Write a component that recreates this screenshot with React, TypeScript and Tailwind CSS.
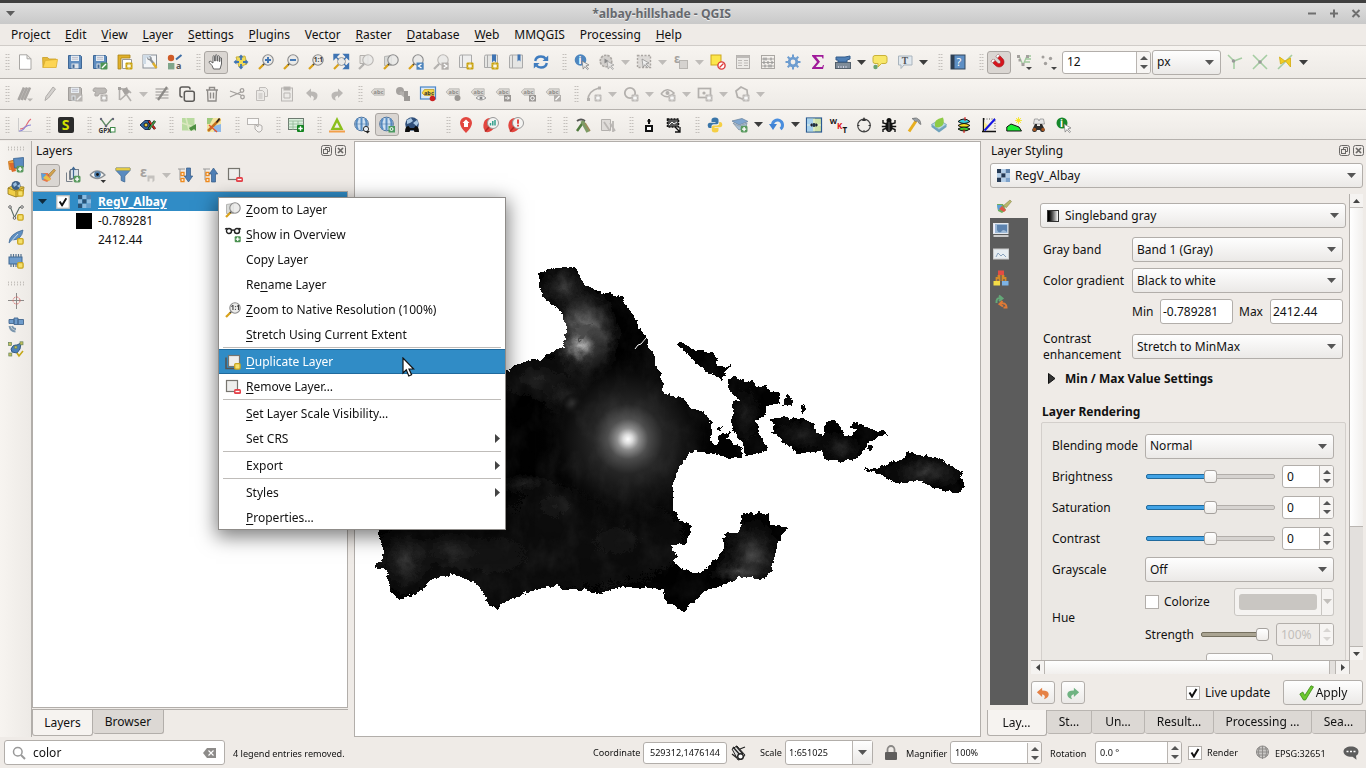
import React from "react";

const grad = "bg-gradient-to-b from-[#fefefe] to-[#ebe9e7]";
const frame = "border border-[#b2aeaa] rounded-[3px]";

function Mn({ t }: { t: string }) {
  const i = t.indexOf("&");
  if (i < 0) return <span className="whitespace-pre">{t}</span>;
  return (
    <span className="whitespace-pre">
      {t.slice(0, i)}
      <u className="underline decoration-1 underline-offset-[2px]">{t[i + 1]}</u>
      {t.slice(i + 2)}
    </span>
  );
}

/* ---------- shared icon parts ---------- */
const Star = ({ c = "#c9a20c" }: { c?: string }) => (
  <g>
    <rect x="8.5" y="8.5" width="7" height="7" rx="1" fill={c} />
    <path d="M12 9.5v5M9.8 10.8l4.4 2.4M14.2 10.8l-4.4 2.4" stroke="#fff" strokeWidth="1" />
  </g>
);
const Plus = () => (
  <g>
    <rect x="8.7" y="8.7" width="6.8" height="6.8" rx="1.4" fill="#5a9a5f" />
    <path d="M12.1 10v4.2M10 12.1h4.2" stroke="#fff" strokeWidth="1.4" />
  </g>
);
const Gold = () => <rect x="9.7" y="9.7" width="5.4" height="5.4" rx="1" fill="#f5e06b" stroke="#c9a521" strokeWidth="1.3" />;
const Lens = ({ x = 10, y = 6, g = false, children }: { x?: number; y?: number; g?: boolean; children?: React.ReactNode }) => (
  <g>
    <path d="M5.8 10.2L1 15" stroke={g ? "#b5b3b0" : "#d9a21b"} strokeWidth="2.2" />
    <path d="M7 9L5 11" stroke={g ? "#aaa" : "#444"} strokeWidth="1.5" />
    <circle cx={x} cy={y} r="5.2" fill="#e9e9e7" fillOpacity=".85" stroke={g ? "#b9b6b3" : "#8b8b8b"} strokeWidth="1.1" />
    {children}
  </g>
);
const Floppy = ({ a = "#5f8dbf", b = "#3f6795" }: { a?: string; b?: string }) => (
  <g>
    <path d="M1.5 1.5h12l1 1v12h-13z" fill={a} stroke={b} />
    <rect x="4" y="1.6" width="8" height="5.4" fill="#e8edf2" />
    <path d="M5 3.4h6M5 5.2h6" stroke="#aab" strokeWidth=".7" />
    <rect x="4.5" y="9.5" width="7" height="5" fill="#dde3ea" />
    <rect x="5.5" y="10.5" width="2" height="3.4" fill={b} />
  </g>
);
const Tag = ({ children, dark = "#8c8a87" }: { children?: React.ReactNode; dark?: string }) => (
  <g>
    <path d="M1 6l3-3.2h10.2v6.4H4z" fill="#dbd8d4" stroke="#b8b5b1" strokeWidth=".8" />
    <text x="3.6" y="8" fontSize="5.6" fontWeight="bold" fill={dark} fontFamily="Noto Sans">abc</text>
    {children}
  </g>
);
const Globe = ({ c = "#5b8fc4", l = "#cfe0f0" }: { c?: string; l?: string }) => (
  <g>
    <circle cx="7.5" cy="7" r="6.8" fill={l} stroke="#4c6f98" strokeWidth="1" />
    <path d="M7.5 .5v13M3.800 1.500q-2.6 5.5 0 11M11.200 1.500q2.6 5.5 0 11" stroke={c} strokeWidth="2" fill="none" />
    <path d="M1 7h13" stroke="#44709f" strokeWidth=".5" />
  </g>
);
const Checker = ({ s = 13 }: { s?: number }) => {
  const c = ["#253a55", "#b5d0ea", "#5b7fa8", "#b5d0ea", "#253a55", "#b5d0ea", "#253a55", "#b5d0ea", "#7ea3cb"];
  return (
    <svg width={s} height={s} viewBox="0 0 3 3">
      {c.map((f, i) => <rect key={i} x={i % 3} y={Math.floor(i / 3)} width="1" height="1" fill={f} />)}
    </svg>
  );
};
const T = ({ x, y, s, f, children, w = "bold" }: { x: number; y: number; s: number; f: string; children: string; w?: string }) => (
  <text x={x} y={y} fontSize={s} fill={f} fontWeight={w} fontFamily="Noto Sans">{children}</text>
);
const G = "#b3b0ad";
const Binoc = ({ c = "#111" }: { c?: string }) => (
  <path d="M3 15q-3-1-1-4l2-4h2v2h3V7h2l2 4q2 3-1 4-2.500.6-3-2h-3q-.5 2.600-3 2z" fill={c} />
);

const icons: Record<string, React.ReactNode> = {
  new: <path d="M2.500.8h7.500l4 4v10.500h-11.500zM10 .8v4h4" fill="#fff" stroke="#a9a7a4" />,
  open: <g><path d="M.6 3.500h5l1.500 1.500h7v2H3.500L1 13.500z" fill="#e5b93a" stroke="#c99d22" strokeWidth=".8" /><path d="M3.300 6.400l12.200-1-1.300 8.100H1z" fill="#fdd554" stroke="#dcae2e" strokeWidth=".8" /></g>,
  save: <Floppy />,
  saveas: <g><Floppy /><rect x="8.500" y="8.500" width="7" height="7" rx="1" fill="#4f9555" /><path d="M10 14l4-4" stroke="#fff" strokeWidth="1.400" /></g>,
  layout: <g><path d="M1 1h12v3H4v11H1z" fill="#e0b02a" stroke="#a98315" strokeWidth=".8" /><path d="M5.500 5.500h9v9h-9z" fill="#fff" stroke="#999" /><Star /></g>,
  layman: <g><rect x="1" y="1" width="13.500" height="13" fill="#f3f5f7" stroke="#8a9097" /><path d="M1 1h8v3H4v6H1z" fill="#cfdbe6" /><path d="M8 5l4 5" stroke="#8a8f95" strokeWidth="2.200" /><path d="M11 9l3.500 5" stroke="#e0b02a" strokeWidth="2.400" /><path d="M5 3q0 4 4 3l1-2q-1-2-3-2l1.500 2-1.500 1z" fill="#8a8f95" /></g>,
  style: <g><circle cx="4" cy="4" r="3.200" fill="#cf5b27" /><rect x="1" y="9" width="6.400" height="6.400" fill="#7fa58a" /><path d="M9 5.500L14.500 1" stroke="#3e6ea5" strokeWidth="2" /><T x={9} y={15} s={9} f="#555">a</T></g>,
  hand: <path d="M5.500 15L4 11.500 1.300 8.700q-.5-1.500 1-1.500L5 9V2.300q.8-1.200 1.600 0V7h.7V1.300q.9-1.200 1.700 0V7h.7V2.200q.9-1 1.600 0v5.300h.6V4q.9-.9 1.600 0v6l-1.500 5z" fill="#fff" stroke="#555" strokeWidth=".9" />,
  move: <g><path d="M3 3l9-1 2 8-8 3z" fill="#f1dc57" stroke="#c0a52a" strokeWidth=".8" /><path d="M8 .5l2.600 3H5.400zM8 15.500l2.600-3H5.400zM.5 8l3-2.600v5.200zM15.500 8l-3-2.600v5.200z" fill="#3f74b3" /><path d="M8 3v3M8 10v3M3 8h3M10 8h3" stroke="#3f74b3" strokeWidth="1.800" /></g>,
  zin: <Lens><path d="M10 3v6M7 6h6" stroke="#3f74b3" strokeWidth="1.900" /></Lens>,
  zout: <Lens><path d="M7 6h6" stroke="#3f74b3" strokeWidth="1.900" /></Lens>,
  z11: <Lens><T x={5.800} y={8.300} s={6.500} f="#333">1:1</T></Lens>,
  zfull: <g><path d="M6 10L1 15" stroke="#d9a21b" strokeWidth="2.200" /><circle cx="8.500" cy="7.500" r="4" fill="#e9e9e7" stroke="#999" /><path d="M1 .5h4.500L1 5zM15.500.5H11L15.500 5zM15.500 14.500H11l4.500-4.500z" fill="#3f74b3" stroke="#3f74b3" strokeWidth="1.400" /><path d="M3 3l2.500 2.500M13.500 3L11 5.500M13.500 12.500L11 10" stroke="#3f74b3" strokeWidth="1.300" /></g>,
  zselg: <g><path d="M2 1.500h8v8H2z" fill="#e8e6e3" stroke={G} /><Lens g /></g>,
  zlayer: <g><path d="M1.500 2.500l7-1v10h-7z" fill="#d8dad8" stroke="#b5b5b3" /><Lens /></g>,
  zlast: <g><Lens /><rect x="8.500" y="8.500" width="7.200" height="7.200" fill="#4f85bd" /><path d="M13.500 10L10.500 12l3 2" stroke="#fff" fill="none" strokeWidth="1.300" /></g>,
  znext: <g><Lens g /><rect x="8.500" y="8.500" width="7.200" height="7.200" fill={G} /><path d="M10.800 10l3 2-3 2" stroke="#fff" fill="none" strokeWidth="1.300" /></g>,
  mapnew: <g><path d="M1.500 2.500q0-1.500 1.500-1.500h10.500v12.500H1.500z" fill="#eee" stroke="#aaa" /><path d="M4.500 1v12" stroke="#aaa" /><Star /></g>,
  booknew: <g><path d="M1.500 2.500q0-1.500 1.500-1.500h11.500v12.500H1.500z" fill="#e5e5e3" stroke="#aaa" /><path d="M4.500 1v12" stroke="#aaa" /><path d="M9 .5h4v8l-2-2-2 2z" fill="#3f74b3" /><Star /></g>,
  books: <g><path d="M1.500 2.500q0-1.500 1.500-1.500h11.500v13H1.500z" fill="#e5e5e3" stroke="#aaa" /><path d="M4.500 1v13" stroke="#aaa" /><path d="M9.500 .5h3v7l-1.500-1.500-1.500 1.500z" fill="#3f74b3" /></g>,
  refresh: <g fill="none" stroke="#3f7cbf" strokeWidth="2.400"><path d="M2.200 7q.8-4.500 5.800-4.500 3 0 4.500 2" /><path d="M13.800 9q-.8 4.500-5.800 4.500-3 0-4.500-2" /><path d="M15.200 1.500v5.500H9.500zM.8 14.500V9h5.700z" fill="#3f7cbf" stroke="none" /></g>,
  info: <g><circle cx="6.500" cy="6" r="5.800" fill="#4e86be" /><T x={4.600} y={9.500} s={10} f="#fff">i</T><path d="M8 7l7 4-3 .8 2.500 3-1 .8-2.600-3-1.700 2.500z" fill="#eee" stroke="#777" strokeWidth=".7" /></g>,
  runsel: <g><circle cx="7" cy="7" r="5.800" fill="#d2cfcc" stroke="#aaa6a2" strokeWidth="1.600" strokeDasharray="2.500 1" /><path d="M5.500 4.500l4 2.500-4 2.500z" fill="#888" /><path d="M8 7l7 4-3 .8 2.500 3-1 .8-2.600-3-1.700 2.500z" fill="#e6e4e2" stroke="#999" strokeWidth=".7" /></g>,
  rectsel: <g><rect x="1.500" y="1.500" width="13" height="12" fill="#dddad7" stroke="#aaa6a2" strokeWidth="1.400" strokeDasharray="2 1.500" /><path d="M6 5l7 4-3 .8 2.500 3-1 .8-2.600-3-1.700 2.500z" fill="#eee" stroke="#888" strokeWidth=".7" /></g>,
  expr: <g><rect x="6.500" y="6.500" width="8" height="8" fill="#d5d2cf" stroke="#b8b5b1" /><T x={1} y={9} s={12} f="#a5a29f">ε</T></g>,
  desel: <g><rect x="1" y="1" width="10" height="10" fill="#fce64b" stroke="#cda71e" /><circle cx="11.500" cy="11.500" r="3.600" fill="#fff" stroke="#dc3b3b" strokeWidth="1.400" /><path d="M9.500 13.500l4-4" stroke="#dc3b3b" strokeWidth="1.300" /></g>,
  table: <g><rect x="1.500" y="1.500" width="13" height="13" fill="#eceae7" stroke={G} /><rect x="1.500" y="1.500" width="13" height="2.500" fill="#bdbab7" /><path d="M3 6.500h4M9 6.500h4M3 9h4M9 9h4M3 11.500h4M9 11.500h4" stroke="#bdbab7" /></g>,
  abacus: <g><rect x="1.500" y="1.500" width="13" height="13" fill="none" stroke="#aaa7a3" /><path d="M1.500 5h13M1.500 8.500h13M1.500 12h13" stroke="#aaa7a3" /><path d="M4 3.500v3M6 3.500v3M11 3.500v3M4 7v3M8 7v3M12 7v3M5 10.500v3M9 10.500v3M11 10.500v3" stroke="#999" strokeWidth="1.200" /></g>,
  gear: <g><circle cx="8" cy="8" r="3.800" fill="none" stroke="#6e9dd0" strokeWidth="2.800" /><path d="M8 .5v3M8 12.500v3M.5 8h3M12.500 8h3M2.700 2.700l2 2M11.300 11.300l2 2M2.700 13.300l2-2M11.300 4.700l2-2" stroke="#6e9dd0" strokeWidth="2" /></g>,
  sum: <path d="M2 1h11.500v3.500h-1l-.6-1.700H6l4 5-4.400 5.200h6.600l.8-2h1L13 15H2v-1l5-6-5-6z" fill="#a01a9a" />,
  measure: <g><rect x=".5" y="8.500" width="15" height="6" fill="#7f8c99" stroke="#54606c" /><path d="M1 3h9l5-1v3l-3 1v2H3V6H1z" fill="#4f7fb5" stroke="#345c8a" /><path d="M3.500 12v2M6 12v2M8.500 12v2M11 12v2" stroke="#dde" strokeWidth=".8" /></g>,
  tip: <g><path d="M3 1.500h10q2 0 2 2v4q0 2-2 2H9.500L6 13V9.500H3q-2 0-2-2v-4q0-2 2-2z" fill="#f8e76a" stroke="#c9b23a" /><circle cx="3.500" cy="13" r="2.200" fill="#69a36e" /></g>,
  text: <g><path d="M1.500 2h13.500v9H7l-3 3.500V11H1.500z" fill="#e1e8ee" stroke="#a9b4bd" /><text x="4.800" y="10" fontSize="9.500" fontWeight="bold" fill="#555" fontFamily="Liberation Serif">T</text></g>,
  help: <g><rect x="1" y="1" width="14" height="14" fill="#5e8fc4" stroke="#34495e" /><rect x="1" y="1" width="3.500" height="14" fill="#2e3f52" /><T x={6.500} y={12} s={11} f="#fff" w="normal">?</T></g>,
  magnet: <g transform="rotate(45 8 8) rotate(90 8 8)"><path d="M3 14V8a5 5 0 0110 0v6H9.800V8a1.800 1.800 0 00-3.600 0v6z" fill="#d8141c" stroke="#9c1016" strokeWidth=".6" /><path d="M3 12h3.200v2.200H3zM9.800 12H13v2.200H9.800z" fill="#fff" stroke="#999" strokeWidth=".5" /></g>,
  snapv: <g><path d="M3 2l4 9 4-9 4 0M8 8l6 0M10 5h5" stroke="#9ec79c" strokeWidth="1.300" fill="none" /><g fill="#a3a09d"><rect x="1" y="1" width="3" height="3" /><rect x="5.500" y="9" width="3" height="3" /><rect x="10" y="1" width="3" height="3" /><rect x="2.500" y="5" width="2.500" height="2.500" /></g><path d="M10 13h6l-3 3z" fill="#444" /></g>,
  snapp: <g><g fill="#a3a09d"><circle cx="2" cy="3" r="1.500" /><circle cx="9.500" cy="4.500" r="1.700" /><circle cx="4.500" cy="9.500" r="1.700" /></g><path d="M10 13h6l-3 3z" fill="#444" /></g>,
  topo1: <g><path d="M1 1l6 6v8M7 7l8-3" stroke="#a6cda3" strokeWidth="1.600" fill="none" /><circle cx="6.500" cy="7" r="1.800" fill="#999" /></g>,
  topo2: <g><path d="M1 1l14 14M15 1L1 15" stroke="#a6cda3" strokeWidth="1.600" /><circle cx="8" cy="8" r="1.800" fill="#999" /></g>,
  topo3: <g><path d="M15 1L1 15" stroke="#a6cda3" strokeWidth="1.600" /><path d="M2.500 3l1 7 5-3 5 6V4L8 7z" fill="#f2d024" stroke="#d4a90c" strokeWidth=".8" /></g>,
  editg: <g stroke="#a9a6a3" strokeWidth="2.600"><path d="M1.500 14L7 1.500M4.500 14L10 1.500M7.500 14L13 1.500" /><path d="M10 12.500h6l-3 3z" fill="#b8b5b2" stroke="none" /></g>,
  penc: <g><path d="M3 14.500l1-4L11 1l2.500 2L6.500 12z" fill="#d4d1ce" stroke="#b0adaa" /></g>,
  saveg: <g><Floppy a="#bab7b4" b="#a19e9b" /><rect x="8.500" y="8.500" width="7" height="7" fill="#b8b5b2" /><path d="M10 14l4-4" stroke="#eee" strokeWidth="1.400" /></g>,
  addpoly: <g><path d="M1 5q0-4 4-3h8q3 2 1 5l-7 1-1 2H3q-1-2 1-4z" fill="#bcb9b6" stroke="#a3a09d" strokeWidth=".8" /><Star c={G} /></g>,
  vert: <g><path d="M2.500 2v12M2 3q8-1 12 4M3 14L13 5M7 5l7 10" stroke={G} strokeWidth="1.600" fill="none" /><path d="M1 1h3v3H1zM5 4l5-3 2 5-4 3z" fill="#a5a29f" /></g>,
  multi: <g><path d="M1.500 3h13M1.500 6h13M1.500 9h13M1.500 12h13" stroke="#c4c1be" strokeWidth="2" /><path d="M4 14L13 1" stroke="#8c8a87" strokeWidth="2.200" /></g>,
  copy: <g fill="#efece9" stroke="#5c5a58" strokeWidth="1.500"><path d="M3.500 11H3q-2 0-2-2V3q0-2 2-2h6q2 0 2 2v.5" fill="none" /><rect x="5.300" y="5.300" width="10" height="10" rx="2" /></g>,
  trash: <g fill="none" stroke="#8f8c89" strokeWidth="1.400"><path d="M2 4h12M5.500 4V1.500h5V4M3.500 4l.5 11h8l.5-11M6.500 6.500v6M9.500 6.500v6" /></g>,
  cut: <g fill="none" stroke="#a3a09d" strokeWidth="1.300"><path d="M1 5l11 4M1 11l11-5" /><circle cx="13.500" cy="11" r="1.800" /><circle cx="13" cy="4.500" r="1.800" /></g>,
  copyg: <g fill="#eceae7" stroke="#c0bdba"><path d="M5.500 1.500h6l2 2v7h-8z" /><path d="M2.500 4.500h6l2 2v8h-8z" /><path d="M4.500 8h4M4.500 10h4M4.500 12h4" /></g>,
  paste: <g fill="#eceae7" stroke="#b9b6b3"><rect x="2.500" y="2" width="11" height="13" /><rect x="5" y="1" width="6" height="3" fill={G} /><path d="M5 7h6v5H5z" /></g>,
  undog: <path d="M2 7l5-4.500v3q7 0 6.500 4.500-.5 4-4.500 4.500 2.500-4-2-5v2.500z" fill="#bab7b4" />,
  redog: <path d="M14 7L9 2.500v3q-7 0-6.500 4.500.5 4 4.500 4.500-2.500-4 2-5v2.500z" fill="#bab7b4" />,
  tag: <Tag />,
  tagpin: <g><circle cx="5" cy="5" r="4" fill="#a5a29f" /><path d="M5 6l6 5" stroke={G} strokeWidth="3" /><path d="M9 5h4v5H9zM9 10h6v5H9z" fill="#9b9895" /></g>,
  taghl: <g><rect x=".5" y="1" width="15" height="12" fill="#dde9f5" stroke="#4a86c8" strokeWidth="1.200" /><path d="M2 7l2.500-3.500H14v6H4.500z" fill="#f5d949" stroke="#b9981c" strokeWidth=".7" /><T x={4} y={8.600} s={5.600} f="#333">abc</T><circle cx="12.500" cy="12.500" r="2.800" fill="#c22" /></g>,
  tag1: <Tag><circle cx="12.500" cy="12" r="3" fill="#9b9895" /></Tag>,
  tag3: <Tag><path d="M6 12q5-5 10 0-5 4-10 0" fill="#eee" stroke="#999" /><circle cx="11" cy="12" r="1.500" fill="#888" /></Tag>,
  tag4: <Tag><rect x="9" y="9" width="7" height="6.500" fill="#999693" /><path d="M10 12h4M12.500 10.500L14.500 12l-2 1.500" stroke="#fff" fill="none" /></Tag>,
  tag5: <Tag><rect x="9" y="9" width="7" height="6.500" fill="#999693" /><circle cx="12.500" cy="12.200" r="1.800" stroke="#fff" fill="none" /></Tag>,
  tag6: <Tag><rect x="9" y="9" width="7" height="6.500" fill="#b3b0ad" /><path d="M10.500 14l4-4" stroke="#fff" strokeWidth="1.300" /></Tag>,
  s1: <g><path d="M2 14Q2 5 13 2" stroke={G} strokeWidth="1.600" fill="none" /><path d="M1 12h3v3H1zM12 .5h3v3h-3z" fill={G} /><Star c="#bdbab7" /></g>,
  s2: <g><circle cx="7" cy="7" r="5.200" fill="none" stroke={G} strokeWidth="1.800" /><Star c="#bdbab7" /></g>,
  s3: <g><path d="M1 8q6-8 13-1-6 7-13 1" fill="none" stroke={G} strokeWidth="1.600" /><circle cx="7.500" cy="7" r="2" fill={G} /><Star c="#bdbab7" /></g>,
  s4: <g><rect x="1.500" y="2.500" width="12" height="9" fill="none" stroke={G} strokeWidth="1.700" /><circle cx="7" cy="7" r="1.600" fill={G} /><Star c="#bdbab7" /></g>,
  s5: <g><path d="M2 5l5-4 6 3 .5 5-5 4-5-2z" fill="none" stroke={G} strokeWidth="1.700" /><Star c="#bdbab7" /></g>,
  chart: <g fill="none"><path d="M1.500 1v13.500H15" stroke="#ccc" /><path d="M3 12q5 0 7-5 2-4 4-5" stroke="#e06a75" strokeWidth="1.100" /><path d="M2 14q4 0 6-4 3-2 6-2" stroke="#8c84d8" strokeWidth="1.100" /></g>,
  sicon: <g><rect width="16" height="16" rx="2" fill="#2b2b2b" /><T x={3.800} y={13.200} s={14} f="#d3e000">S</T></g>,
  gpx: <g><path d="M2 2l5 7 6-7" fill="none" stroke="#5d8a62" strokeWidth="1.300" /><circle cx="2" cy="2" r="1.200" fill="#667" /><circle cx="14" cy="2" r="1.200" fill="#667" /><circle cx="7" cy="9" r="1.300" fill="#667" /><T x={-.5} y={15.800} s={6.500} f="#333">GPX</T><rect x="11.500" y="10.500" width="4.500" height="4.500" fill="#fff" stroke="#3f8a48" /></g>,
  db: <g><path d="M0 8l5-4.500h5v9H5z" fill="#2f67a5" stroke="#1a2c50" /><circle cx="6" cy="8" r="2" fill="#e8cb3a" stroke="#222" /><path d="M8.500 4l6.500 8M15 4l-6.500 8" stroke="#111" strokeWidth="2.600" /><path d="M9 4l6 8" stroke="#d02a20" strokeWidth="1.500" /><path d="M15 4L9 12" stroke="#3f9a48" strokeWidth="1.500" /></g>,
  map1: <g><rect x="1" y="1" width="12.500" height="12.500" fill="#b9dba0" /><path d="M1 6l12 4M5 1l3 12" stroke="#dbe8c0" strokeWidth="1.500" /><path d="M8 11l7-4v7l-2-2-3 2z" fill="#4d8f42" /></g>,
  map2: <g><rect x="1" y="1" width="14" height="14" fill="#f3e5a2" /><path d="M1 1h6l-3 6H1z" fill="#9ec97c" /><path d="M8 9l7-2v8H8z" fill="#8fb9e8" /><path d="M2 14L14 2" stroke="#c4721f" strokeWidth="2.500" /><path d="M3 8l8 7" stroke="#e05533" strokeWidth="1.500" /><path d="M10 5l3-4 1 1-3 4z" fill="#222" /></g>,
  selhand: <g><rect x=".5" y="1.500" width="11" height="6" fill="#fbfaf9" stroke="#b9b6b3" /><path d="M8 7l3 3v-2q2-1 4 1v4l-2 2h-2l-3-3z" fill="#f4f2f0" stroke="#b0adaa" /></g>,
  addtab: <g><rect x=".5" y="1.500" width="15" height="11" fill="#d9efdc" stroke="#6d7a70" /><path d="M.5 4h15M5 4v9M10 4v9M.5 7h15M.5 10h15" stroke="#8fb596" strokeWidth=".8" /><rect x="9" y="8" width="7" height="7" rx="1" fill="#12841f" /><path d="M12.500 9.300v4.400M10.300 11.500h4.400" stroke="#fff" strokeWidth="1.400" /></g>,
  tri: <g><path d="M8 0l6.500 13H1.500zM8 5.500L5.300 10.800h5.400z" fill="#8bbf1c" fillRule="evenodd" /><path d="M0 13.500h16v2H0z" fill="#f2a04a" /></g>,
  globe1: <g><Globe /><circle cx="12" cy="12" r="2.600" fill="#e7eef5" stroke="#333" /><path d="M11 14h5l-2.500 2.500z" fill="#222" /></g>,
  globe2: <g><Globe /><rect x="9.500" y="9" width="6.500" height="6.500" fill="#4b9a60" /><circle cx="12.500" cy="12" r="1.500" fill="none" stroke="#fff" /></g>,
  globe3: <g><circle cx="8" cy="7" r="6.800" fill="#31507a" /><path d="M3 3l4-2 2 3-3 2-3 1zM9 6l4-3 1.500 3-2 3z" fill="#a9c6e2" /><path d="M1 15q0-6 3.500-6l1.500 2h4l1.500-2Q15 9 15 15h-4.500l-1-2h-3l-1 2z" fill="#0d0d0d" /></g>,
  pin: <g><path d="M8 16Q2 10 2 6a6 6 0 0112 0q0 4-6 10z" fill="#e2463f" /><path d="M8 2.500L4.500 6H6v4h4V6h1.500z" fill="#fff" /></g>,
  find1: <g><path d="M1 5q2-4 6-4l5 9q-4 6-9 5-4-4-2-10z" fill="#e2463f" /><circle cx="10" cy="6" r="5.500" fill="#f4f4f2" stroke="#999" /><path d="M7.500 8.500V6M9.800 8.500V4M12 8.500V3" stroke="#35a08d" strokeWidth="1.500" /><path d="M6 10l-4 4.500" stroke="#b32a24" strokeWidth="1.600" /></g>,
  find2: <g><path d="M1 5q2-4 6-4l5 9q-4 6-9 5-4-4-2-10z" fill="#e2463f" /><circle cx="10" cy="6" r="5.500" fill="#f4f4f2" stroke="#999" /><path d="M10 2.500v4.300M10 7.800v1.600" stroke="#e03b34" strokeWidth="1.800" /><path d="M6 10l-4 4.500" stroke="#b32a24" strokeWidth="1.600" /></g>,
  tools: <g><path d="M2 14L9 4" stroke="#4f7a3e" strokeWidth="2.500" /><path d="M2 4q4-3 8 0" stroke="#555" strokeWidth="2" fill="none" /><path d="M7 4l6 11" stroke="#7d9b65" strokeWidth="3.500" /><path d="M10 6l5 8" stroke="#9c8a5a" strokeWidth="1.500" /></g>,
  tools2: <g><path d="M1.500 2.500h9v11h-9z" fill="#dedbd8" stroke={G} /><path d="M4 5l6 9M13 4v11M10 6l5 8" stroke="#bab7b4" strokeWidth="1.800" /></g>,
  lock: <g><rect x="4" y="8" width="8" height="7" fill="#111" /><rect x="6" y="10" width="4" height="3" fill="#fff" /><path d="M8 2v5" stroke="#111" strokeWidth="2" /><path d="M6 4h4" stroke="#111" /></g>,
  clip: <g><rect x="1.500" y="2" width="11" height="8" fill="#555" stroke="#111" strokeWidth="1.500" strokeDasharray="2 1" /><path d="M3 8l3-3 2 2 3-2" stroke="#eee" fill="none" /><path d="M9 10l5 5M14 10v5H9" stroke="#111" fill="none" strokeWidth="1.300" /></g>,
  python: <g><path d="M8 .5Q4.500.5 4.500 3v2H8.500v.8H3Q.7 5.800.7 8.500T3 11h1.500V9q0-1.800 2-1.800h3.300q1.700 0 1.700-1.700V3Q11.500.5 8 .5z" fill="#3a75a8" /><path d="M8 15.500q3.500 0 3.500-2.500v-2H7.500v-.8H13q2.300 0 2.300-2.700T13 5h-.8v1.500Q12.200 8.500 10 8.500H6.500Q4.800 8.500 4.800 10.200V13q0 2.500 3.200 2.500z" fill="#f5cf45" /></g>,
  stack: <g><path d="M0 4l10-2.500 6 3-9 3.500z" fill="#7fa6cf" stroke="#6f88a2" strokeWidth=".8" /><path d="M1 6l6 3 8-3-1 4-7 3z" fill="#a9c0d6" stroke="#7f92a5" strokeWidth=".8" /><Plus /></g>,
  undo: <g><path d="M3.500 8a5 5 0 118 4" stroke="#4a8ede" strokeWidth="3" fill="none" /><path d="M0 7h8l-4 6z" fill="#3f82d4" /></g>,
  osm: <g><rect x=".5" y="1" width="15" height="14" fill="#cfe3a8" stroke="#2b5a92" strokeWidth="1.200" /><path d="M1 1.500h6v13H1z" fill="#a6d1ee" /><path d="M8 1.500v13M1 8h14" stroke="#e8efe0" /><path d="M4 8l2-2v4zM12 8l-2-2v4z" fill="#223" /><circle cx="8" cy="8" r="2" fill="#234" /></g>,
  wkt: <g><T x={-1.200} y={7} s={7.500} f="#111">W</T><T x={5.900} y={11.500} s={8} f="#e01414">K</T><T x={11.400} y={15.500} s={8} f="#111">T</T></g>,
  comp: <g><circle cx="8" cy="8.500" r="6.300" fill="none" stroke="#444" strokeWidth="1.200" /><path d="M8 0l2 4H6z" fill="#333" /><path d="M1.500 8.500h2M12.500 8.500h2M8 13v2" stroke="#333" /></g>,
  bug: <g><ellipse cx="8" cy="9.500" rx="3.600" ry="5.500" fill="#111" /><circle cx="8" cy="3.500" r="2.500" fill="#111" /><path d="M2 3v3l4 1M14 3v3l-4 1M.8 9.500h14.400M2 15v-2.500L6 11M14 15v-2.500L10 11" stroke="#111" strokeWidth="1.400" fill="none" /><path d="M8 5v9" stroke="#888" strokeWidth=".7" /></g>,
  hammer: <g><path d="M3 14.500L10 4" stroke="#e8ae1f" strokeWidth="3" /><path d="M6 1.500q5-2 8 2l1 4-2-1-1.500-2.500-2 .5z" fill="#9aa0a6" stroke="#666" strokeWidth=".6" /></g>,
  leaf: <g><path d="M.5 7.500L8 3l7.500 4.500v2.500L8 15.500.5 10z" fill="#6fa3bd" /><path d="M.5 7.500L8 3l7.500 4.500L8 12.500z" fill="#b8d8e5" stroke="#7ba6bb" strokeWidth=".7" /><path d="M4 9.500Q2 2 12 .5q3 9-6 10z" fill="#8ecb46" /></g>,
  stack2: <g><path d="M2 4.500q6-5 12 0-6 4-12 0z" fill="#39c9d9" stroke="#111" /><path d="M2 8.500q6-4 12 0-6 4-12 0z" fill="#f4dd1d" stroke="#111" /><path d="M2 12q6-4 12 0-6 4-12 0z" fill="#3fc42f" stroke="#111" /><path d="M9 0v4M8 12v4" stroke="#e01010" /></g>,
  graph: <g><path d="M2.500 1v13M1 14.500h14" stroke="#111" strokeWidth="1.400" /><path d="M3 2h11v11" stroke="#555" strokeDasharray="1 1.500" fill="none" /><path d="M3 5l6 5-6 4z" fill="#f6e98c" /><path d="M3.500 13.500L14 2" stroke="#1414e6" strokeWidth="2" /></g>,
  hill: <g><path d="M.8 14V10L5 7l8 3 2.500 4z" fill="#18ef33" stroke="#111" /><circle cx="12.500" cy="3.500" r="2" fill="#fff02a" /><path d="M12.500 0v7M9 3.500h7M10 1l5 5M15 1l-5 5" stroke="#f3e326" strokeWidth=".8" /></g>,
  binoc: <g><path d="M3.500 2h3.500l1 2 1-2h3.500l1 5h-11z" fill="#e6e6e6" stroke="#888" strokeWidth=".7" /><Binoc c="#2d2d2d" /><circle cx="3.500" cy="12.500" r="1.700" fill="#a5551f" /><circle cx="12" cy="12.500" r="1.700" fill="#a5551f" /></g>,
  infog: <g><circle cx="6" cy="6" r="5.500" fill="#17882b" /><T x={4} y={9.500} s={10} f="#fff">i</T><path d="M8 7l7 4-3 .8 2.500 3-1 .8-2.600-3-1.700 2.500z" fill="#fff" stroke="#777" strokeWidth=".7" /></g>,
  /* side toolbar */
  dsm: <g><path d="M.5 4.500l8-2 1 9-8 1z" fill="#f0a33c" stroke="#c47016" strokeWidth=".8" /><path d="M1 6l3 9 4-1-2-8z" fill="#dd6a2a" /><path d="M5.500 1.500l10-1v9.500l-9 1z" fill="#5b8bc0" stroke="#3c658f" strokeWidth=".8" /><Plus /></g>,
  geo: <g><path d="M0 7l4-2 12 1-1 7-7 3-8-3z" fill="#f0ce46" stroke="#8f7417" strokeWidth=".8" /><path d="M0 7l8 3 7-3M8 10v6" stroke="#8f7417" fill="none" strokeWidth=".8" /><circle cx="8" cy="4.500" r="4.500" fill="#3c5f86" /><path d="M5 3l3-2 1 3-3 2zM9 5l3-2v4z" fill="#9cc0e0" /><Gold /></g>,
  vec: <g><path d="M2.500 2.500l4 10 5-10q2-1 3 0" stroke="#5c6d66" strokeWidth="1.100" fill="none" /><g fill="#fff" stroke="#555" strokeWidth=".9"><circle cx="2" cy="2" r="1.300" /><circle cx="6.500" cy="13" r="1.300" /><circle cx="14" cy="2" r="1.300" /></g><Gold /></g>,
  feather: <g><path d="M1 14Q1 5 15 1q-1 10-11 10z" fill="#5f90c2" stroke="#3d6690" strokeWidth=".7" /><path d="M1 15L10 5" stroke="#dbe7f2" strokeWidth=".9" /><Gold /></g>,
  chip: <g><rect x="1" y="4" width="13" height="7" fill="#6f9ccb" stroke="#3f6894" /><path d="M3 1v3M5.500 1v3M8 1v3M10.500 1v3M13 1v3M3 11v3M5.500 11v3M8 11v3" stroke="#55728f" strokeWidth="1.200" /><Gold /></g>,
  cross: <g><path d="M8.500 0v16M0 7.500h16" stroke="#8c8a88" strokeWidth="1" /><circle cx="8.500" cy="7.500" r="3.500" fill="none" stroke="#d56a6a" strokeDasharray="2 1.200" /></g>,
  sat: <g><path d="M1 2.500h5v4H1zM10 2.500h5.500v5H10zM6 1h4v6.500H6z" fill="#6f9ccb" stroke="#44688f" strokeWidth=".9" /><path d="M1.500 9q1 5 6 5.500M4 9q1 3 4 3" stroke="#7b96ad" fill="none" strokeWidth="2" /></g>,
  topochk: <g><path d="M3 8q2-5 6-4l4-2-1 6-3 4-5-1z" fill="#4c80b8" stroke="#335a85" /><g fill="#c4bf57" stroke="#67865e" strokeWidth=".7"><rect x=".5" y="1.500" width="3" height="3" /><rect x="12" y=".8" width="3" height="3" /><rect x=".8" y="12" width="3" height="3" /><rect x="6.500" y="5" width="2.500" height="2.500" /></g><path d="M9 12l2 3 4-5" stroke="#c4a818" strokeWidth="1.600" fill="none" /></g>,
  /* layer panel */
  brush: <g><path d="M1 6l7 0 3 6-4 3-5-2z" fill="#e6774a" /><path d="M1 6l5 1-1 5-3 1z" fill="#5aa0dc" /><path d="M3 11l6 3 2-2-5-4z" fill="#e8c048" /><path d="M8 8l6-6 1.500 1.500-5 6z" fill="#d2a24c" stroke="#8a6a2e" strokeWidth=".5" /></g>,
  brushg: <g><path d="M1 6l6 0 3 6-4 3-4-2z" fill="#6fae5a" /><path d="M1 7l5 0-1 4-3 1z" fill="#5aa0dc" /><path d="M3 11l5 3 2-2-4-4z" fill="#e0574a" /><path d="M7 8l7-6 1.500 1.500-5 6z" fill="#b9b86c" stroke="#7a7a3e" strokeWidth=".5" /></g>,
  addgrp: <g><path d="M1.500 5.500v9h6M4.500 3.500v9h3" stroke="#77808a" fill="none" /><rect x="5.500" y="2.500" width="8" height="9" fill="#dde4ea" stroke="#77808a" /><path d="M8.500 0v11M6.500 3l2-2.500 2 2.500" stroke="#3f6894" fill="none" strokeWidth="1.200" /><Plus /></g>,
  eye: <g><path d="M0 8q7-8 15 0-8 7-15 0" fill="#f7f7f6" stroke="#8a8f94" strokeWidth="1.300" /><circle cx="7.500" cy="7.500" r="3.300" fill="#4f7eab" /><circle cx="7.500" cy="7.500" r="1.400" fill="#111" /><path d="M10.500 13h5.500l-2.700 3z" fill="#333" /></g>,
  filter: <g><path d="M1 1h14v2.500L9.800 9v6l-3.600-1.500V9L1 3.500z" fill="#5a8bc0" stroke="#3f6894" strokeWidth=".8" /><path d="M1 1h14v2.200H1z" fill="#f0d850" stroke="#c0a428" strokeWidth=".6" /></g>,
  expg: <g><T x={0} y={9.500} s={14} f="#a5a29f">ε</T><path d="M7.500 8.500h7v5l-2 2v-4h-3v3h-2z" fill="#c4c1be" /></g>,
  expand: <g><path d="M1 2h7M3 2v11h4M3 7h4" stroke="#999" fill="none" /><path d="M4 5.500h3v3H4zM4 11.500h3v3H4z" fill="#fff" stroke="#ef8a1c" strokeWidth="1.300" /><path d="M9.500 1h4v8h2.200L11.500 15 7.300 9h2.200z" fill="#4f7fb5" stroke="#335a85" strokeWidth=".7" /></g>,
  collap: <g><path d="M1 2h7M3 2v11h4M3 7h4" stroke="#999" fill="none" /><path d="M4 5.500h3v3H4zM4 11.500h3v3H4z" fill="#fff" stroke="#ef8a1c" strokeWidth="1.300" /><path d="M9.500 15h4V7h2.200L11.500 1 7.300 7h2.200z" fill="#4f7fb5" stroke="#335a85" strokeWidth=".7" /></g>,
  remove: <g><rect x="1.500" y="1.500" width="11" height="11" fill="#eeeeec" stroke="#77756f" strokeWidth="1.200" /><rect x="9" y="10" width="7" height="5" rx="1.500" fill="#e5424a" /><path d="M10.500 12.500h4" stroke="#fff" strokeWidth="1.300" /></g>,
  dup: <g><path d="M1 3.500v11h10" fill="none" stroke="#555" strokeWidth="1.600" /><rect x="3.500" y="1.500" width="11" height="11" fill="#eeeeec" stroke="#77756f" strokeWidth="1.200" /><Gold /></g>,
  glasses: <g fill="none" stroke="#222" strokeWidth="1.400"><path d="M.5 2.500q0-1 2-1M15.500 2.500q0-1-2-1" /><circle cx="4" cy="4" r="2.500" /><circle cx="12" cy="4" r="2.500" /><path d="M6.500 3.500q1.500-1 3 0" /><g stroke="none"><rect x="9.700" y="9.200" width="6" height="6" rx="1" fill="#4b9150" /></g><path d="M12.700 10.300v3.800M10.800 12.200h3.800" stroke="#fff" strokeWidth="1.200" /></g>,
  hist: <g><rect x=".5" y="1.500" width="14.500" height="10" fill="#9db9d6" stroke="#e4e8ec" /><path d="M4 3h10v7q-4-4-6 0-3 1-4-2z" fill="#5c82ad" /><path d="M1.500 2v9" stroke="#eef" /><path d="M.5 14h15" stroke="#f2f2f2" strokeWidth="1.500" /></g>,
  wave: <g><rect x=".5" y="3" width="15" height="10" fill="#e7edf1" stroke="#ccc" /><path d="M3 11l2-4 3 3 2-2 3 3" stroke="#8aa3bd" fill="none" /></g>,
  tree: <g><rect x="5" y=".5" width="6" height="4.500" fill="#e34c43" /><path d="M5.500 5v3H3.500v3M10.500 5v3h2v3M6.500 5v6M9.500 5v6" stroke="#d38a2a" strokeWidth="1.800" fill="none" /><rect x=".5" y="11" width="6.500" height="4.500" fill="#f3dc47" /><rect x="9" y="11" width="6.500" height="4.500" fill="#7db3e5" /></g>,
  hist2: <g><path d="M8 4.500Q3 3 3.500 9M6 1.500l3.500 3L6 7" stroke="#64a878" fill="none" strokeWidth="2" /><path d="M7.500 9.500q6-1 6 4h-3M9.500 7l-3 3 3.500 2.500" stroke="#e07a35" fill="none" strokeWidth="2" /></g>,
};

const Ic = ({ n, s = 16 }: { n: string; s?: number }) => (
  <svg width={s} height={s} viewBox="0 0 16 16" className="shrink-0 overflow-visible">{icons[n]}</svg>
);
const Handle = () => (
  <div className="flex h-[18px] w-4 shrink-0 justify-end pr-[3px]">
    <div className="h-full w-[5px] bg-[radial-gradient(circle,#b9b5b1_0.7px,transparent_0.9px)] bg-[size:2.5px_3px]" />
  </div>
);
const Arrow = ({ c = "#444" }: { c?: string }) => (
  <svg width="9" height="5" viewBox="0 0 9 5" className="shrink-0"><path d="M0 0h9L4.500 5z" fill={c} /></svg>
);

function Tools({ items }: { items: string }) {
  return (
    <>
      {items.split(" ").map((n, i) => {
        if (n === "|") return <Handle key={i} />;
        if (n === "_") return <div key={i} className="w-[13px] shrink-0" />;
        if (n === "-") return <div key={i} className="w-[10px] shrink-0" />;
        if (n === "v" || n === "V")
          return <div key={i} className="flex w-3 shrink-0 items-center justify-center"><Arrow c={n === "V" ? "#3c3c3c" : "#bfbcb9"} /></div>;
        const on = n.startsWith("*");
        return (
          <div key={i} className="flex w-[25px] shrink-0 items-center justify-center">
            {on ? (
              <div className="-mx-1 flex h-[23px] w-6 items-center justify-center rounded-[3px] border border-[#aaa6a2] bg-[#dad6d2]"><Ic n={n.slice(1)} /></div>
            ) : <Ic n={n} />}
          </div>
        );
      })}
    </>
  );
}

const row = "flex items-center border-b border-[#b5b1ad] bg-gradient-to-b from-[#f7f4f0] to-[#edeae6] shrink-0 overflow-hidden";

const Updown = ({ c = "#555" }: { c?: string }) => (
  <div className="flex w-[14px] shrink-0 flex-col items-center justify-center gap-[5px] border-l border-[#b9b5b1] bg-[#f7f5f3]">
    <svg width="8" height="4" viewBox="0 0 8 4"><path d="M0 4h8L4 0z" fill={c} /></svg>
    <svg width="8" height="4" viewBox="0 0 8 4"><path d="M0 0h8L4 4z" fill={c} /></svg>
  </div>
);
function Spin({ v, cls, off }: { v: string; cls: string; off?: boolean }) {
  return (
    <div className={`flex shrink-0 overflow-hidden ${frame} ${off ? "bg-[#efece9] text-[#c2bfbb]" : "bg-white"} ${cls}`}>
      <span className="flex flex-1 items-center pl-1">{v}</span>
      <Updown c={off ? "#d8d5d2" : "#555"} />
    </div>
  );
}
function Combo({ v, cls, icon }: { v: string; cls: string; icon?: React.ReactNode }) {
  return (
    <div className={`flex shrink-0 items-center ${frame} ${grad} pl-1 pr-[6px] ${cls}`}>
      {icon}
      <span className="flex-1 whitespace-nowrap">{v}</span>
      <Arrow c="#555" />
    </div>
  );
}
const Check = ({ on }: { on?: boolean }) => (
  <div className="flex h-[14px] w-[14px] shrink-0 items-center justify-center border border-[#b2aeaa] bg-white">
    {on && <svg width="10" height="10" viewBox="0 0 10 10"><path d="M1.500 4.500l2.500 4L8.500 1" stroke="#111" strokeWidth="2" fill="none" /></svg>}
  </div>
);
const DockBtns = () => (
  <div className="flex gap-[3px]">
    <svg width="11" height="11" viewBox="0 0 11 11" fill="none" stroke="#6a6866"><rect x=".5" y=".5" width="10" height="10" rx="2" /><rect x="2.500" y="4.500" width="4" height="4" /><path d="M4.500 4.500v-2h4v4h-2" /></svg>
    <svg width="11" height="11" viewBox="0 0 11 11" fill="none" stroke="#6a6866"><rect x=".5" y=".5" width="10" height="10" rx="2" /><path d="M3 3l5 5M8 3L3 8" strokeWidth="1.700" /></svg>
  </div>
);

function Terrain() {
  return (
    <svg className="block h-full w-full" viewBox="355 142 625 594" preserveAspectRatio="none">
      <defs>
        <radialGradient id="mayon">
          <stop offset="0" stopColor="#fff" /><stop offset=".05" stopColor="#dcdcdc" /><stop offset=".12" stopColor="#8c8c8c" />
          <stop offset=".22" stopColor="#4c4c4c" /><stop offset=".38" stopColor="#252525" /><stop offset=".65" stopColor="#101010" /><stop offset="1" stopColor="#000" stopOpacity="0" />
        </radialGradient>
        <radialGradient id="soft"><stop offset="0" stopColor="#b4b4b4" /><stop offset=".3" stopColor="#6c6c6c" /><stop offset=".65" stopColor="#2c2c2c" stopOpacity=".75" /><stop offset="1" stopColor="#000" stopOpacity="0" /></radialGradient>
        <radialGradient id="dim"><stop offset="0" stopColor="#4a4a4a" /><stop offset="1" stopColor="#111" stopOpacity="0" /></radialGradient>
        <radialGradient id="faint"><stop offset="0" stopColor="#1c1c1c" /><stop offset="1" stopColor="#0c0c0c" stopOpacity="0" /></radialGradient>
        <filter id="coast" x="-5%" y="-5%" width="110%" height="110%">
          <feTurbulence type="fractalNoise" baseFrequency=".16" numOctaves="3" seed="4" result="n" />
          <feDisplacementMap in="SourceGraphic" in2="n" scale="6" xChannelSelector="R" yChannelSelector="G" result="d" />
          <feComponentTransfer in="d"><feFuncA type="discrete" tableValues="0 1" /></feComponentTransfer>
        </filter>
        <filter id="ridge" x="-10%" y="-10%" width="120%" height="120%">
          <feTurbulence type="fractalNoise" baseFrequency=".12" numOctaves="4" seed="9" result="n" />
          <feDisplacementMap in="SourceGraphic" in2="n" scale="10" xChannelSelector="R" yChannelSelector="G" />
        </filter>
        <filter id="grain" x="0" y="0" width="100%" height="100%">
          <feTurbulence type="fractalNoise" baseFrequency=".05 .035" numOctaves="5" seed="12" />
          <feColorMatrix values="0 0 0 0 .4  0 0 0 0 .4  0 0 0 0 .4  1.300 0 0 0 -.52" />
        </filter>
        <mask id="land" maskUnits="userSpaceOnUse" x="355" y="142" width="625" height="594">
          <g fill="#fff" filter="url(#coast)">
            <polygon points="539,273 552,268 575,267 580,277 585,284 598,292 610,294 622,296 627,308 635,315 639,327 646,337 647,345 653,353 655,365 661,372 662,383 664,394 673,395 685,400 692,410 707,413 710,420 712,430 711,442 718,445 718,435 730,432 728,438 735,444 742,448 742,458 728,458 715,454 695,451 685,458 677,473 672,487 673,507 677,518 687,522 691,528 686,543 671,546 678,557 673,560 680,568 697,574 703,572 710,563 723,553 725,533 738,533 742,522 741,516 748,513 769,513 769,525 788,527 778,542 775,555 771,573 760,579 740,577 723,585 703,593 688,607 682,612 677,606 667,603 662,590 650,588 620,587 610,590 597,595 590,590 563,590 557,585 527,592 503,603 498,610 487,602 483,590 473,582 463,578 452,574 443,578 430,580 423,590 399,600 390,590 387,570 375,568 382,560 383,547 378,532 378,490 440,400 500,371 507,370 523,362 540,359 550,352 563,348 567,327 562,312 543,297 539,287" />
            <g transform="translate(660 320) scale(.3333)">
              <polygon points="52,66 62,66 85,78 105,90 150,95 165,110 175,135 195,142 212,135 198,155 190,183 140,155 105,122 75,100" />
              <polygon points="200,180 225,170 260,185 280,182 290,197 318,197 330,212 362,220 355,250 320,258 310,285 287,305 300,345 325,388 290,400 260,408 250,375 232,355 216,320 215,285 222,245 238,240 205,205" />
              <polygon points="366,256 378,225 398,240 396,257" />
              <polygon points="418,262 435,256 440,270 425,280" />
              <polygon points="330,295 375,292 440,298 462,310 470,340 490,345 495,305 520,298 545,318 552,348 580,345 590,325 570,320 575,310 605,312 615,325 665,332 685,345 650,350 625,365 610,395 590,415 545,427 490,412 485,390 450,398 415,400 375,370 340,335 345,315" />
              <polygon points="612,448 650,445 700,425 735,412 740,395 775,405 830,415 870,435 905,460 913,500 895,520 850,510 800,495 770,480 740,490 700,485 655,460" />
              <polygon points="622,380 636,378 634,390 622,388" />
              <polygon points="172,322 186,322 184,332 172,330" />
            </g>
          </g>
          <path d="M635 349l3-4 3-1 5-6" stroke="#000" strokeWidth="1" fill="none" />
        </mask>
      </defs>
      <g mask="url(#land)">
        <rect x="355" y="142" width="625" height="594" fill="#020202" />
        <g filter="url(#ridge)">
          <ellipse cx="490" cy="555" rx="170" ry="80" fill="url(#faint)" opacity=".8" />
          <ellipse cx="620" cy="540" rx="110" ry="70" fill="url(#faint)" opacity=".7" />
          <ellipse cx="565" cy="288" rx="32" ry="30" fill="url(#dim)" opacity=".8" />
          <ellipse cx="585" cy="336" rx="40" ry="56" fill="url(#soft)" opacity=".85" />
          <ellipse cx="580" cy="345" rx="26" ry="24" fill="url(#soft)" />
          <ellipse cx="567" cy="394" rx="32" ry="24" fill="url(#dim)" />
          <path d="M577 330l6-4 10-5-7 12-5 8z" fill="#4a4a4a" />
          <ellipse cx="540" cy="378" rx="60" ry="30" fill="url(#faint)" />
          <ellipse cx="525" cy="484" rx="34" ry="12" fill="url(#dim)" opacity=".5" />
          <ellipse cx="555" cy="505" rx="45" ry="30" fill="url(#faint)" />
          <ellipse cx="405" cy="560" rx="34" ry="38" fill="url(#dim)" opacity=".7" />
          <ellipse cx="450" cy="550" rx="45" ry="26" fill="url(#dim)" opacity=".4" />
          <ellipse cx="752" cy="556" rx="34" ry="42" fill="url(#dim)" />
          <ellipse cx="740" cy="572" rx="36" ry="12" fill="url(#dim)" />
          <ellipse cx="745" cy="415" rx="22" ry="35" fill="url(#dim)" opacity=".4" />
          <ellipse cx="800" cy="435" rx="38" ry="18" fill="url(#dim)" opacity=".4" />
          <ellipse cx="840" cy="448" rx="28" ry="20" fill="url(#dim)" opacity=".5" />
          <ellipse cx="925" cy="472" rx="48" ry="20" fill="url(#dim)" opacity=".7" />
        </g>
        <circle cx="573" cy="404" r="11" fill="url(#soft)" />
        <circle cx="628" cy="439" r="92" fill="url(#mayon)" />
        <rect x="355" y="260" width="625" height="360" filter="url(#grain)" opacity=".12" />
      </g>
    </svg>
  );
}

const menuItems: [string, string?, string?][] = [
  ["&Zoom to Layer", "zlayer"], ["&Show in Overview", "glasses"], ["Copy Layer"], ["Re&name Layer"],
  ["&Zoom to Native Resolution (100%)", "z11"], ["&Stretch Using Current Extent"], ["-"],
  ["&Duplicate Layer", "dup"], ["&Remove Layer…", "remove"], ["-"],
  ["&Set Layer Scale Visibility…"], ["Set CRS", "", ">"], ["-"], ["Export", "", ">"], ["-"],
  ["Styles", "", ">"], ["&Properties…"],
];

function ContextMenu() {
  return (
    <div className="absolute left-[218px] top-[197px] h-[333px] w-[288px] border border-[#8f8c89] bg-white shadow-[0_5px_18px_2px_rgba(0,0,0,0.5)]">
      <div className="-mt-px">
        {menuItems.map(([t, ic, sub], i) =>
          t === "-" ? (
            <div key={i} className="h-[2px] px-1"><div className="h-px bg-[#bfbcb9]" /></div>
          ) : (
            <div key={i} className={`flex h-[25px] items-center ${ic === "dup" ? "border-y border-[#206a9d] bg-[#308cc6] text-white" : ""}`}>
              <div className="flex w-[27px] justify-center">{ic ? <Ic n={ic} /> : null}</div>
              <Mn t={t} />
              {sub && <svg className="ml-auto mr-[5px]" width="5" height="9" viewBox="0 0 5 9"><path d="M0 0v9l5-4.500z" fill="#444" /></svg>}
            </div>
          )
        )}
      </div>
    </div>
  );
}

function SliderRow({ l }: { l: string }) {
  return (
    <div className="flex h-[31px] items-center">
      <span className="w-[94px]">{l}</span>
      <Slider cls="w-[129px]" half />
      <Spin v="0" cls="ml-[7px] h-[23px] w-[52px]" />
    </div>
  );
}
function Slider({ cls, half }: { cls: string; half?: boolean }) {
  return (
    <div className={`flex shrink-0 items-center ${cls}`}>
      <div className={`h-[5px] flex-1 rounded-l-[2px] border ${half ? "border-[#206a9d] bg-[#41a3e6]" : "border-[#75705f] bg-[#aaa492]"}`} />
      <div className="-mx-px h-[13px] w-[13px] rounded-[3px] border border-[#a5a19d] bg-gradient-to-b from-white to-[#efedea]" />
      {half && <div className="h-[5px] flex-1 rounded-r-[2px] border border-[#b2aeaa] bg-[#d6d3d0]" />}
    </div>
  );
}

function LayersPanel() {
  return (
    <div className="flex w-[316px] shrink-0 flex-col">
      <div className="flex h-[21px] items-center justify-between pl-[4px] pr-[2px]"><span>Layers</span><DockBtns /></div>
      <div className="flex h-[30px] items-center pl-[3px] pb-[2px]">
        <Tools items="*brush addgrp eye filter expg v expand collap remove" />
      </div>
      <div className="h-[517px] border border-[#b2aeaa] bg-white">
        <div className="flex h-[19px] items-center bg-[#308cc6] pl-[5px]">
          <Arrow c="#0f2b3d" />
          <div className="ml-[9px] scale-95"><Check on /></div>
          <div className="ml-[8px] opacity-70"><Checker s={13} /></div>
          <span className="ml-[7px] font-bold text-white underline decoration-1 underline-offset-2">RegV_Albay</span>
        </div>
        <div className="flex h-[19px] items-center pl-[43px]"><div className="h-4 w-4 bg-black" /><span className="pl-[6px]">-0.789281</span></div>
        <div className="flex h-[19px] items-center pl-[65px]">2412.44</div>
      </div>
      <div className="mt-px flex items-start border-t border-[#b2aeaa]">
        <div className="flex h-[26px] w-[61px] items-center justify-center rounded-b-[3px] border border-t-0 border-[#b2aeaa] bg-[#f6f3f0]">Layers</div>
        <div className="flex h-[24px] w-[71px] items-center justify-center rounded-b-[3px] border border-l-0 border-t-0 border-[#b2aeaa] bg-[#dcd8d4]">Browser</div>
      </div>
    </div>
  );
}

function StyleForm() {
  return (
    <div className="h-[466px] w-[318px] overflow-hidden pl-[9px] pt-[9px]">
      <Combo v="Singleband gray" cls="h-[25px] w-[306px] pl-[6px]" icon={<div className="mr-[6px] h-3 w-3 border border-[#333] bg-gradient-to-r from-black to-white" />} />
      <div className="pl-[3px] pt-[6px]">
        <div className="flex h-[31px] items-center"><span className="w-[89px]">Gray band</span><Combo v="Band 1 (Gray)" cls="h-[25px] w-[211px]" /></div>
        <div className="flex h-[31px] items-center"><span className="w-[89px] whitespace-nowrap">Color gradient</span><Combo v="Black to white" cls="h-[25px] w-[211px]" /></div>
        <div className="flex h-[31px] items-center pl-[89px]">
          <span className="w-[28px]">Min</span><div className={`flex h-[25px] w-[73px] items-center bg-white pl-[2px] ${frame}`}>-0.789281</div>
          <span className="ml-[6px] w-[31px]">Max</span><div className={`flex h-[25px] w-[73px] items-center bg-white pl-[2px] ${frame}`}>2412.44</div>
        </div>
        <div className="flex h-[39px] items-center"><span className="w-[89px] leading-4">Contrast enhancement</span><Combo v="Stretch to MinMax" cls="h-[25px] w-[211px]" /></div>
        <div className="flex h-[25px] items-center font-bold">
          <svg className="ml-[5px] mr-[9px]" width="8" height="11" viewBox="0 0 8 11"><path d="M.5.5v10L7 5.500z" fill="#333" stroke="#111" /></svg>
          Min / Max Value Settings
        </div>
      </div>
      <div className="flex h-[31px] items-end pb-[1px] pl-[2px] font-bold leading-[18px]">Layer Rendering</div>
      <div className="ml-px h-[260px] w-[305px] rounded-[2px] border border-[#d3cfcb] bg-[#ebe8e4] pl-[10px] pt-[8px]">
        <div className="flex h-[30px] items-center"><span className="w-[93px] whitespace-nowrap">Blending mode</span><Combo v="Normal" cls="h-[25px] w-[189px]" /></div>
        <SliderRow l="Brightness" /><SliderRow l="Saturation" /><SliderRow l="Contrast" />
        <div className="flex h-[31px] items-center"><span className="w-[93px]">Grayscale</span><Combo v="Off" cls="h-[25px] w-[189px]" /></div>
        <div className="flex">
          <span className="w-[93px] pt-[25px]">Hue</span>
          <div>
            <div className="flex h-[33px] items-center">
              <Check /><span className="w-[75px] pl-[5px]">Colorize</span>
              <div className="flex h-[28px] w-[88px] items-center justify-center rounded-l-[3px] border border-[#c9c6c2] bg-[#f5f3f1]"><div className="h-4 w-[78px] rounded-[3px] bg-[#c9c6c2]" /></div>
              <div className="flex h-[28px] w-[12px] items-center justify-center rounded-r-[3px] border border-l-0 border-[#c9c6c2] bg-[#f5f3f1]"><Arrow c="#c2bfbb" /></div>
            </div>
            <div className="flex h-[33px] items-center">
              <span className="w-[56px]">Strength</span><Slider cls="w-[67px]" /><Spin off v="100%" cls="ml-[8px] h-[23px] w-[58px]" />
            </div>
            <div className={`ml-[61px] mt-[2px] h-[25px] w-[67px] ${frame} ${grad}`} />
          </div>
        </div>
      </div>
    </div>
  );
}

const rtabs: [string, string][] = [["St…", "w-[45px]"], ["Un…", "w-[53px]"], ["Result…", "w-[69px]"], ["Processing …", "w-[98px]"], ["Sea…", "w-[54px]"]];

function StylingPanel() {
  return (
    <div className="flex min-w-0 flex-1 flex-col">
      <div className="flex h-[21px] items-center justify-between pl-[10px] pr-[2px]"><span>Layer Styling</span><DockBtns /></div>
      <div className="pl-[9px] pt-[2px]"><Combo v="RegV_Albay" cls="h-[25px] w-[373px] pl-[6px]" icon={<div className="mr-[5px]"><Checker s={13} /></div>} /></div>
      <div className="flex pl-[9px] pt-[6px]">
        <div className="flex w-[38px] shrink-0 flex-col">
          <div className="flex h-[24px] items-center pl-[6px]"><Ic n="brushg" /></div>
          <div className="flex h-[487px] flex-col gap-[8px] bg-[#5c5c5c] pl-[3px] pt-[4px]">
            <Ic n="hist" /><Ic n="wave" /><Ic n="tree" /><Ic n="hist2" />
          </div>
        </div>
        <div className="ml-[3px] flex flex-col">
          <div className="flex">
            <StyleForm />
            <div className="flex h-[466px] w-[14px] flex-col border-l border-[#b2aeaa] bg-[#e3e0dd]">
              <div className="flex h-[14px] items-center justify-center border-b border-[#c4c0bc] bg-[#f5f3f1]"><svg width="7" height="4" viewBox="0 0 7 4"><path d="M0 4h7L3.500 0z" fill="#444" /></svg></div>
              <div className="h-[319px] border-b border-[#b9b5b1] bg-gradient-to-r from-white to-[#f1efed]" />
              <div className="mt-auto flex h-[14px] items-center justify-center border-t border-[#b9b5b1] bg-[#f5f3f1]"><svg width="7" height="4" viewBox="0 0 7 4"><path d="M0 0h7L3.500 4z" fill="#444" /></svg></div>
            </div>
          </div>
          <div className="flex h-[14px] w-[319px] items-stretch border-t border-r border-[#b2aeaa] bg-[#e3e0dd]">
            <div className="flex w-[14px] items-center justify-center border-r border-[#b9b5b1] bg-[#f5f3f1]"><svg width="4" height="7" viewBox="0 0 4 7"><path d="M4 0v7L0 3.500z" fill="#444" /></svg></div>
            <div className="w-[285px] border-r border-[#b9b5b1] bg-gradient-to-b from-white to-[#f1efed]" />
            <div className="ml-auto flex w-[14px] items-center justify-center border-l border-[#b9b5b1] bg-[#f5f3f1]"><svg width="4" height="7" viewBox="0 0 4 7"><path d="M0 0v7l4-3.500z" fill="#444" /></svg></div>
          </div>
          <div className="mt-[6px] flex h-[25px] items-center">
            <div className={`flex h-[23px] w-6 items-center justify-center ${frame} ${grad}`}><svg width="14" height="14" viewBox="0 0 16 16"><path d="M1 7l6-5v3q8 0 7.500 5-.5 4-5.500 5 3-4-2-5.500v3z" fill="#e58145" /></svg></div>
            <div className={`ml-[6px] flex h-[23px] w-6 items-center justify-center ${frame} ${grad}`}><svg width="14" height="14" viewBox="0 0 16 16"><path d="M15 7L9 2v3q-8 0-7.500 5 .5 4 5.500 5-3-4 2-5.500v3z" fill="#6fb382" /></svg></div>
            <div className="ml-[101px]"><Check on /></div>
            <span className="w-[83px] pl-[5px]">Live update</span>
            <div className={`flex h-[25px] w-[80px] items-center justify-center gap-[2px] ${frame} ${grad}`}>
              <svg width="15" height="16" viewBox="0 0 15 16"><path d="M.8 9l3-2 2 3.500L12 .8l2.500 1L6.500 15H4.500z" fill="#6cc92e" stroke="#3c8a15" strokeWidth=".8" /></svg>Apply
            </div>
          </div>
        </div>
      </div>
      <div className="mt-auto flex h-[27px] items-start pl-[6px]">
        <div className="flex h-[26px] w-[60px] items-center justify-center rounded-b-[3px] border border-t-0 border-[#b2aeaa] bg-[#f6f3f0] pr-px">Lay…</div>
        {rtabs.map(([t, w]) => (
          <div key={t} className={`flex h-[24px] shrink-0 items-center justify-center rounded-b-[3px] border border-l-0 border-[#b9b5b1] bg-[#dcd8d4] ${w}`}>{t}</div>
        ))}
      </div>
    </div>
  );
}

function StatusBar() {
  return (
    <div className="flex h-[31px] shrink-0 items-center whitespace-nowrap text-[9.1px]">
      <div className={`ml-[4px] flex h-[25px] w-[221px] items-center bg-white pl-[7px] pr-[8px] text-[12px] ${frame}`}>
        <svg width="14" height="14" viewBox="0 0 14 14" fill="none" stroke="#999" strokeWidth="1.500"><circle cx="5.800" cy="5.800" r="4.300" /><path d="M9 9l4 4" strokeWidth="2" /></svg>
        <span className="flex-1 pl-[7px]">color</span>
        <svg width="13" height="10" viewBox="0 0 13 10"><path d="M4 0h9v10H4L0 5z" fill="#8d8b89" /><path d="M5.500 2.500l5 5M10.500 2.500l-5 5" stroke="#fff" strokeWidth="1.100" /></svg>
      </div>
      <span className="ml-[8px] w-[360px] pt-[2px]">4 legend entries removed.</span>
      <span className="w-[50px]">Coordinate</span>
      <div className={`flex h-[22px] w-[84px] items-center justify-center bg-white ${frame}`}>529312,1476144</div>
      <div className="ml-1 mr-[13px]">
        <svg width="16" height="16" viewBox="0 0 16 16"><path d="M1 4l5-3 8 9-3 4-4 1z" fill="#ddd" stroke="#222" /><path d="M2 2l8 9M5 1l7 8M1 9l5 4M9 4l5-2" stroke="#222" strokeWidth="1.300" /><circle cx="9.500" cy="11.500" r="2.800" fill="#fff" stroke="#222" strokeWidth="1.400" /></svg>
      </div>
      <span className="w-[25px]">Scale</span>
      <div className={`flex h-[25px] w-[88px] items-center bg-white ${frame}`}>
        <span className="flex-1 pl-[3px]">1:651025</span>
        <div className={`flex h-full w-5 items-center justify-center border-l border-[#b9b5b1] ${grad}`}><Arrow c="#555" /></div>
      </div>
      <svg className="ml-[11px] mr-[8px]" width="14" height="16" viewBox="0 0 14 16"><path d="M3.500 8V4.500a3.500 3.500 0 017 0V8" fill="none" stroke="#8a8886" strokeWidth="1.800" /><rect x="1" y="7" width="12" height="8" rx="1" fill="#5f5d5c" /></svg>
      <span className="w-[44px] pt-[2px]">Magnifier</span>
      <Spin v="100%" cls="h-[23px] w-[92px] pt-px" />
      <span className="ml-[8px] w-[45px] pt-[2px]">Rotation</span>
      <Spin v="0.0 °" cls="h-[23px] w-[87px]" />
      <div className="ml-[6px]"><Check on /></div>
      <span className="w-[53px] pl-[5px]">Render</span>
      <svg width="15" height="15" viewBox="0 0 15 15" fill="none" stroke="#8a8886"><circle cx="7.500" cy="7" r="6" fill="#c9c7c5" /><path d="M7.500 1v13M1 7h13M4.500 2q-2.500 5 0 10M10.500 2q2.500 5 0 10M2 4h11M2 10h11" strokeWidth=".9" /></svg>
      <span className="w-[73px] pl-[5px] pt-[2px]">EPSG:32651</span>
      <svg width="16" height="16" viewBox="0 0 16 16"><path d="M8 1.500c4 0 7.500 2 7.500 5 0 2.500-1.500 3.800-2.500 4.300l.5 4-4-3C4 12 .5 9.500.5 6.500c0-3 3.500-5 7.500-5z" fill="#5d5d5d" /><path d="M3.500 6.500h2M7 6.500h2M10.500 6.500h2" stroke="#fff" strokeWidth="1.600" /></svg>
    </div>
  );
}

export default function App() {
  return (
    <div className="relative flex h-[768px] w-[1366px] flex-col overflow-hidden bg-[#efebe7] font-['Noto_Sans',sans-serif] text-[12px] leading-4 text-[#111]">
      <div className="h-[3px] shrink-0 bg-[#3f3f3f]" />
      <div className="grid h-[21px] shrink-0 grid-cols-[60px_1fr_60px] items-center bg-gradient-to-b from-[#dedede] to-[#c9c9c9]">
        <div className="pl-[6px]"><Arrow c="#5c5c5c" /></div>
        <div className="pr-[43px] text-center text-[12.2px] font-bold text-[#66696e] [text-shadow:0_1px_0_#eee]">*albay-hillshade - QGIS</div>
        <svg className="ml-[1px]" width="54" height="9" viewBox="0 0 54 9" stroke="#6f6f6f" strokeWidth="2"><path d="M1 4.500h8M23 4.500h8M27 .5v8M45.500 1l7 7M52.500 1l-7 7" /></svg>
      </div>
      <div className="flex h-[22px] shrink-0 items-center gap-[14.8px] border-b border-[#d0ccc8] pl-[11px]">
        {["Pro&ject", "&Edit", "&View", "&Layer", "&Settings", "&Plugins", "Vect&or", "&Raster", "&Database", "&Web", "MMQGIS", "Pro&cessing", "&Help"].map((m) => <Mn key={m} t={m} />)}
      </div>
      <div className={`${row} h-[33px]`}>
        <div className="-ml-[3.5px] flex h-full items-center">
          <Tools items="| new open save saveas layout layman style | *hand move zin zout z11 zfull zselg zlayer zlast znext mapnew booknew books refresh | info runsel v rectsel v expr v desel table abacus gear sum measure V tip text V | help | *magnet snapv snapp" />
        </div>
        <Spin v="12" cls="ml-[0.5px] h-[23px] w-[89px]" />
        <Combo v="px" cls="ml-[1px] mr-[1px] h-[25px] w-[69px]" />
        <Tools items="topo1 topo2 topo3 V" />
      </div>
      <div className={`${row} h-[31px]`}>
        <div className="-ml-[3.5px] flex items-center">
          <Tools items="| editg penc saveg addpoly vert v multi copy trash cut copyg paste undog redog | tag tagpin taghl tag1 tag3 tag4 tag5 tag6 | s1 v s2 v s3 v s4 v s5 v" />
        </div>
      </div>
      <div className={`${row} h-[30px]`}>
        <div className="-ml-[3.5px] flex items-center">
          <Tools items="| chart | sicon | gpx | db | map1 map2 | selhand | addtab | tri globe1 *globe2 globe3 _ | pin find1 find2 - | | tools tools2 | lock clip | python stack V undo V osm wkt comp bug hammer leaf stack2 graph hill binoc infog" />
        </div>
      </div>
      <div className="flex min-h-0 flex-1">
        <div className="mt-[1px] flex w-8 shrink-0 flex-col items-center border-r border-[#b2aeaa] bg-gradient-to-r from-[#f7f4f0] to-[#edeae6] pt-[5px]">
          <div className="h-[5px] w-[17px] bg-[radial-gradient(circle,#b9b5b1_0.7px,transparent_0.9px)] bg-[size:3px_2.5px]" />
          <div className="flex flex-col gap-[8px] pt-[6px]"><Ic n="dsm" /><Ic n="geo" /><Ic n="vec" /><Ic n="feather" /><Ic n="chip" /></div>
          <div className="mt-[12px] h-[5px] w-[17px] bg-[radial-gradient(circle,#b9b5b1_0.7px,transparent_0.9px)] bg-[size:3px_2.5px]" />
          <div className="flex flex-col gap-[8px] pt-[7px]"><Ic n="cross" /><Ic n="sat" /><Ic n="topochk" /></div>
        </div>
        <LayersPanel />
        <div className="ml-[6px] mt-[1px] w-[627px] shrink-0 border border-[#b2aeaa] bg-white"><Terrain /></div>
        <StylingPanel />
      </div>
      <StatusBar />
      <ContextMenu />
      <svg className="absolute left-[402px] top-[357px]" width="13" height="20" viewBox="0 0 13 20"><path d="M1 1v15l3.300-3.200L6.800 19l2.800-1.200L7 12h4.700z" fill="#fff" stroke="#111" strokeWidth="1.200" /></svg>
    </div>
  );
}
